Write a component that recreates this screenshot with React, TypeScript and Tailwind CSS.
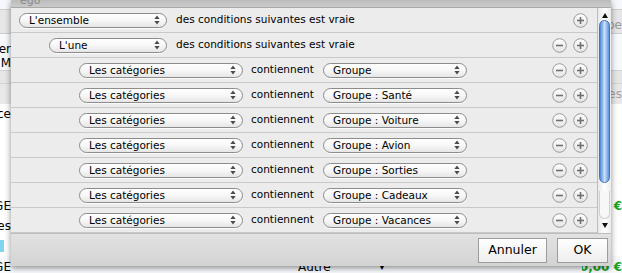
import React from "react";

const FONT = { fontFamily: '"DejaVu Sans", "Liberation Sans", sans-serif' };

const groupes = [
  "Groupe",
  "Groupe : Santé",
  "Groupe : Voiture",
  "Groupe : Avion",
  "Groupe : Sorties",
  "Groupe : Cadeaux",
  "Groupe : Vacances",
];

function Arrows() {
  return (
    <svg width="6" height="10" viewBox="0 0 6 10" className="shrink-0">
      <path d="M3 0.5 L5.6 4 H0.4 Z" fill="#4a4a4a" />
      <path d="M3 9.5 L5.6 6 H0.4 Z" fill="#4a4a4a" />
    </svg>
  );
}

function Popup({ label, className }: { label: string; className: string }) {
  return (
    <div
      className={
        "flex h-[15px] shrink-0 items-center justify-between rounded-full border border-[#8c8c8c] bg-gradient-to-b from-white via-[#f7f7f7] to-[#e6e6e6] pl-[9px] pr-[6px] text-[10.5px] leading-none text-black shadow-[0_1px_0_rgba(255,255,255,0.8)] " +
        className
      }
    >
      <span>{label}</span>
      <Arrows />
    </div>
  );
}

function RoundButton({ minus }: { minus?: boolean }) {
  return (
    <svg width="15" height="15" viewBox="0 0 15 15">
      <defs>
        <linearGradient id={minus ? "gm" : "gp"} x1="0" y1="0" x2="0" y2="1">
          <stop offset="0" stopColor="#ffffff" />
          <stop offset="1" stopColor="#e4e4e4" />
        </linearGradient>
      </defs>
      <circle cx="7.5" cy="7.5" r="6.8" fill={`url(#${minus ? "gm" : "gp"})`} stroke="#9a9a9a" strokeWidth="1" />
      <path d="M4 7.5 H11" stroke="#707070" strokeWidth="1.6" />
      {!minus && <path d="M7.5 4 V11" stroke="#707070" strokeWidth="1.6" />}
    </svg>
  );
}

function Row({ className, children, minus = true }: { className: string; children: React.ReactNode; minus?: boolean }) {
  return (
    <div className={"flex h-[25px] shrink-0 items-center border-b border-[#c9c9c9] bg-[#ececec] pr-[9px] " + className}>
      {children}
      <div className="ml-auto flex items-center gap-[6px]">
        {minus && <RoundButton minus />}
        <RoundButton />
      </div>
    </div>
  );
}

function Scrollbar() {
  return (
    <div className="flex w-[14px] shrink-0 flex-col items-center border-l border-[#bdbdbd] bg-gradient-to-r from-[#e9e9e9] via-white to-[#ececec]">
      <div className="flex h-[10px] items-end">
        <svg width="6" height="5" viewBox="0 0 6 5">
          <path d="M3 0 L6 5 H0 Z" fill="#111" />
        </svg>
      </div>
      <div className="mt-[2px] h-[163px] w-[11px] rounded-full border border-[#3f74c2] bg-gradient-to-r from-[#4d86d6] via-[#c9e1fa] to-[#5a92dc]" />
      <div className="mx-auto mt-[8px] h-[28px] w-[11px] rounded-b-full border border-t-0 border-[#d0d0d0] bg-[#f7f7f7]" />
      <div className="flex-1" />
      <div className="flex h-[12px] items-start pt-[2px]">
        <svg width="6" height="5" viewBox="0 0 6 5">
          <path d="M3 5 L6 0 H0 Z" fill="#111" />
        </svg>
      </div>
    </div>
  );
}

function BgRow({
  className,
  left,
  right,
  rightClass = "text-black",
  children,
}: {
  className: string;
  left?: string;
  right?: string;
  rightClass?: string;
  children?: React.ReactNode;
}) {
  return (
    <div className={"flex shrink-0 items-center justify-between " + className}>
      <div className="flex w-[11px] justify-end overflow-hidden whitespace-nowrap text-[12px] leading-[14px] text-black">{left}</div>
      {children}
      <div className={"flex w-[40px] justify-end overflow-hidden whitespace-nowrap text-[12px] leading-[14px] " + rightClass}>{right}</div>
    </div>
  );
}

export default function App() {
  return (
    <div className="relative h-[273px] w-[622px] overflow-hidden bg-white" style={FONT}>
      {/* window behind the sheet */}
      <div className="flex h-full flex-col">
        <BgRow className="h-[9px] bg-[#f5f7fb]" />
        <BgRow className="h-[25px] items-end border-y border-[#cfcfcf] bg-[#e6e6e6] pb-[1px]" right="Dépe" rightClass="text-[#9a9a9a]" />
        <BgRow className="h-[22px] items-end bg-[#f7f9fd]" left="Dépenser" />
        <BgRow className="h-[14px] bg-[#f7f9fd]" left="Dont M" />
        <BgRow className="h-[14px] border-y border-[#d4d4d4] bg-[#e6e6e6]" />
        <BgRow className="h-[20px] bg-[#e8e8e8]" right="ses" rightClass="text-[#a0a0a0]" />
        <BgRow className="h-[20px] bg-white" left="Assurance" />
        <BgRow className="h-[72px] bg-white" />
        <BgRow className="h-[20px] bg-white" left="BUDGE" right="10,00 €" rightClass="font-bold text-[#1aa31a]" />
        <BgRow className="h-[20px] bg-white" left="Sorties" />
        <BgRow className="h-[20px] bg-white">
          <div className="absolute left-0 h-[12px] w-[4px] bg-[#7fd6ee]" />
        </BgRow>
        <BgRow className="h-[17px] bg-[#f7f9fd] pt-[4px]" left="BUDGE" right="10,00 €" rightClass="font-bold text-[#1aa31a]">
          <div className="ml-[287px] flex items-center gap-[48px] text-[12px] text-black">
            <span>Autre</span>
            <span className="text-[9px]">▼</span>
          </div>
          <div className="flex-1" />
        </BgRow>
      </div>

      {/* sheet */}
      <div className="absolute left-[11px] top-0 flex h-[266px] w-[600px] flex-col overflow-hidden bg-[#ececec] shadow-[0_2px_6px_rgba(0,0,0,0.45)]">
        <div className="flex h-[8px] shrink-0 items-start overflow-hidden border-b border-[#a8a8a8] bg-gradient-to-b from-[#bcbcbc] to-[#cacaca] pl-[9px] text-[11px] leading-[11px] text-[#8a8a8a]">
          <span className="-mt-[5px]">ègo</span>
        </div>
        <div className="flex h-[225px] shrink-0">
          <div className="flex flex-1 flex-col text-[10.5px] text-black">
            <Row className="pl-[8px]" minus={false}>
              <Popup label="L'ensemble" className="w-[148px]" />
              <span className="ml-[9px]">des conditions suivantes est vraie</span>
            </Row>
            <Row className="pl-[38px]">
              <Popup label="L'une" className="w-[118px]" />
              <span className="ml-[9px]">des conditions suivantes est vraie</span>
            </Row>
            {groupes.map((g) => (
              <Row key={g} className="pl-[68px]">
                <Popup label="Les catégories" className="w-[164px]" />
                <span className="ml-[8px] w-[72px]">contiennent</span>
                <Popup label={g} className="w-[144px]" />
              </Row>
            ))}
          </div>
          <Scrollbar />
        </div>
        <div className="flex flex-1 items-start justify-end gap-[10px] border-t border-[#bdbdbd] bg-gradient-to-b from-[#e2e2e2] to-[#d3d3d3] pr-[3px] pt-[4px]">
          <button className="h-[25px] w-[69px] border border-[#9c9c9c] bg-gradient-to-b from-white to-[#ededed] text-[12.5px] text-black">
            Annuler
          </button>
          <button className="h-[25px] w-[51px] border border-[#9c9c9c] bg-gradient-to-b from-white to-[#ededed] text-[12.5px] text-black">
            OK
          </button>
        </div>
      </div>
    </div>
  );
}
